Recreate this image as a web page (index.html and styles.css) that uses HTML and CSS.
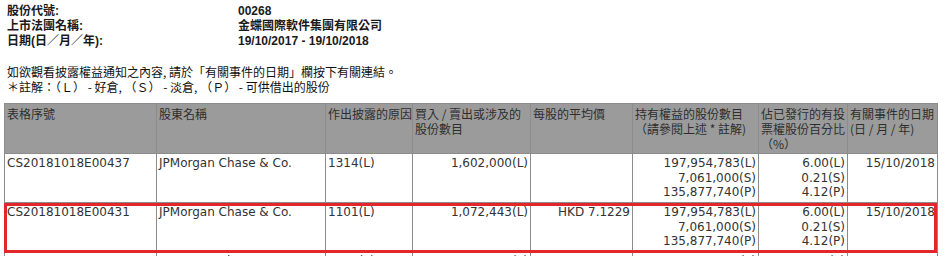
FILE: index.html
```html
<!DOCTYPE html>
<html lang="zh-Hant">
<head>
<meta charset="utf-8">
<title>權益披露</title>
<link rel="stylesheet" href="styles.css">
</head>
<body>
<div class="info">
  <div class="lbl">股份代號:</div><div class="val">00268</div>
  <div class="lbl">上市法團名稱:</div><div class="val">金蝶國際軟件集團有限公司</div>
  <div class="lbl">日期(日／月／年):</div><div class="val">19/10/2017 - 19/10/2018</div>
</div>
<div class="notes">
  <p>如欲觀看披露權益通知之內容, 請於「有關事件的日期」欄按下有關連結。</p>
  <p>＊註解：（Ｌ） - 好倉, （Ｓ） - 淡倉, （Ｐ） - 可供借出的股份</p>
</div>
<div class="tablewrap">
<table class="grid">
  <colgroup>
    <col class="c1"><col class="c2"><col class="c3"><col class="c4"><col class="c5"><col class="c6"><col class="c7"><col class="c8">
  </colgroup>
  <thead>
    <tr>
      <th>表格序號</th>
      <th>股東名稱</th>
      <th>作出披露的原因</th>
      <th>買入 / 賣出或涉及的<br>股份數目</th>
      <th>每股的平均價</th>
      <th>持有權益的股份數目<br>（請參閱上述 * 註解)</th>
      <th>佔已發行的有投<br>票權股份百分比<br>（%）</th>
      <th>有關事件的日期<br>(日 / 月 / 年)</th>
    </tr>
  </thead>
  <tbody>
    <tr>
      <td>CS20181018E00437</td>
      <td>JPMorgan Chase &amp; Co.</td>
      <td>1314(L)</td>
      <td class="r">1,602,000(L)</td>
      <td class="r"></td>
      <td class="r">197,954,783(L)<br>7,061,000(S)<br>135,877,740(P)</td>
      <td class="r">6.00(L)<br>0.21(S)<br>4.12(P)</td>
      <td class="r">15/10/2018</td>
    </tr>
    <tr>
      <td>CS20181018E00431</td>
      <td>JPMorgan Chase &amp; Co.</td>
      <td>1101(L)</td>
      <td class="r">1,072,443(L)</td>
      <td class="r">HKD 7.1229</td>
      <td class="r">197,954,783(L)<br>7,061,000(S)<br>135,877,740(P)</td>
      <td class="r">6.00(L)<br>0.21(S)<br>4.12(P)</td>
      <td class="r">15/10/2018</td>
    </tr>
    <tr>
      <td>CS20181018E00425</td>
      <td>JPMorgan Chase &amp; Co.</td>
      <td>1201(L)</td>
      <td class="r">254,000(L)</td>
      <td class="r">HKD 7.2013</td>
      <td class="r">196,882,340(L)<br>7,061,000(S)<br>135,877,740(P)</td>
      <td class="r">5.97(L)<br>0.21(S)<br>4.12(P)</td>
      <td class="r">12/10/2018</td>
    </tr>
  </tbody>
</table>
<div class="highlight"></div>
</div>
</body>
</html>
```

FILE: styles.css
```css
html, body {
  margin: 0;
  padding: 0;
  background: #ffffff;
}
body {
  padding: 4px 0 0 4px;
  font-family: "Liberation Sans", "Noto Sans CJK TC", sans-serif;
  font-size: 12px;
  color: #111111;
}
.info {
  display: grid;
  grid-template-columns: 231px auto;
  padding-left: 3px;
  font-weight: bold;
  line-height: 15px;
  color: #1a1a1a;
}
.notes {
  margin-top: 15px;
  padding-left: 3px;
  line-height: 15px;
  font-family: "Noto Sans CJK TC", "Liberation Sans", sans-serif;
}
.notes p {
  margin: 0;
}
.tablewrap {
  position: relative;
  margin-top: 9px;
  width: 934px;
}
.grid {
  border-collapse: collapse;
  table-layout: fixed;
  width: 934px;
  font-size: 12px;
  line-height: 14.5px;
}
.c1 { width: 152px; }
.c2 { width: 169px; }
.c3 { width: 87px; }
.c4 { width: 118px; }
.c5 { width: 102px; }
.c6 { width: 126px; }
.c7 { width: 89px; }
.c8 { width: 90px; }
.grid th, .grid td {
  border: 1px solid #8c8c8c;
  padding: 2px;
  vertical-align: top;
  text-align: left;
  white-space: nowrap;
  overflow: hidden;
}
.grid th {
  background: #9b9b9b;
  color: #2e2e2e;
  font-weight: normal;
  font-family: "Noto Sans CJK TC", "DejaVu Sans", sans-serif;
  line-height: 15px;
  height: 43px;
}
.grid td {
  font-family: "DejaVu Sans", Verdana, sans-serif;
  color: #333333;
  height: 44px;
}
.grid td.r {
  text-align: right;
}
.highlight {
  position: absolute;
  left: 0;
  top: 100px;
  width: 933px;
  height: 50px;
  box-sizing: border-box;
  border: 3px solid #e3262a;
  pointer-events: none;
}
```
